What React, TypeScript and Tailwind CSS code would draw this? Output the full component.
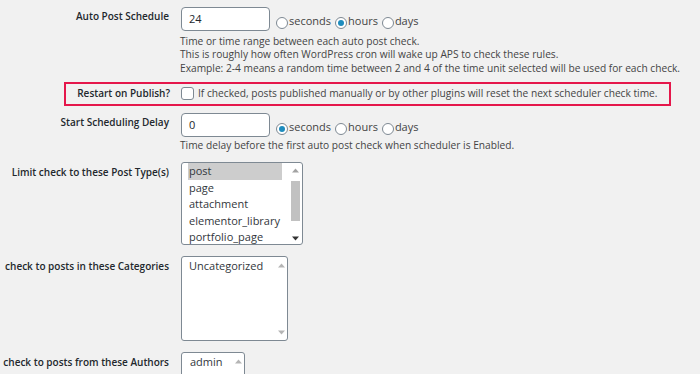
import React from "react";

const font = { fontFamily: '"Open Sans", "Noto Sans", sans-serif' };

function Radio({ checked }: { checked?: boolean }) {
  return (
    <span className="inline-flex items-center justify-center w-[12px] h-[12px] rounded-full border border-[#7e8993] bg-white shrink-0 mt-[3px]">
      {checked && <span className="w-[6px] h-[6px] rounded-full bg-[#1e8cbe]" />}
    </span>
  );
}

function Radios({ sel }: { sel: number }) {
  const items = ["seconds", "hours", "days"];
  return (
    <div className="flex items-center ml-[6px]">
      {items.map((t, i) => (
        <span key={t} className="flex items-center mr-[4px]">
          <Radio checked={sel === i} />
          <span className="ml-[1px] text-[11px] text-[#444]">{t}</span>
        </span>
      ))}
    </div>
  );
}

function UpArrow({ color }: { color: string }) {
  return (
    <svg width="7" height="5" viewBox="0 0 7 5">
      <path d="M0 4.5 L3.5 0.5 L7 4.5 Z" fill={color} />
    </svg>
  );
}
function DownArrow({ color }: { color: string }) {
  return (
    <svg width="7" height="5" viewBox="0 0 7 5">
      <path d="M0 0.5 L3.5 4.5 L7 0.5 Z" fill={color} />
    </svg>
  );
}

export default function App() {
  return (
    <div className="w-[700px] h-[374px] bg-[#f1f1f1] overflow-hidden relative text-[#23282d]" style={font}>
      {/* Row 1 */}
      <div className="flex pt-[7px]">
        <div className="w-[169px] shrink-0 text-right text-[10px] font-semibold pt-[2px] whitespace-nowrap">Auto Post Schedule</div>
        <div className="ml-[11px]">
          <div className="flex items-start">
            <div className="ml-[1px] w-[89px] h-[24px] border border-[#7e8993] rounded-[4px] bg-white text-[11px] pl-[7px] flex items-center">24</div>
            <div className="pt-[6px]">
              <Radios sel={1} />
            </div>
          </div>
          <div className="mt-[4px] text-[10.2px] leading-[13.3px] text-[#444] whitespace-nowrap">
            <div>Time or time range between each auto post check.</div>
            <div>This is roughly how often WordPress cron will wake up APS to check these rules.</div>
            <div>Example: 2-4 means a random time between 2 and 4 of the time unit selected will be used for each check.</div>
          </div>
        </div>
      </div>

      {/* Row 2 - highlighted */}
      <div className="mt-[7px] ml-[64px] w-[607px] h-[24px] border-2 border-[#e5174b] flex items-center">
        <div className="w-[104px] shrink-0 text-right text-[10px] font-semibold whitespace-nowrap">Restart on Publish?</div>
        <span className="ml-[11px] w-[13px] h-[13px] border border-[#7e8993] rounded-[3px] bg-white shrink-0" />
        <span className="ml-[4px] text-[10.2px] text-[#444] whitespace-nowrap">If checked, posts published manually or by other plugins will reset the next scheduler check time.</span>
      </div>

      {/* Row 3 */}
      <div className="flex mt-[7px]">
        <div className="w-[169px] shrink-0 text-right text-[10px] font-semibold pt-[2px] whitespace-nowrap">Start Scheduling Delay</div>
        <div className="ml-[11px]">
          <div className="flex items-start">
            <div className="ml-[1px] w-[89px] h-[24px] border border-[#7e8993] rounded-[4px] bg-white text-[11px] pl-[7px] flex items-center">0</div>
            <div className="pt-[6px]">
              <Radios sel={0} />
            </div>
          </div>
          <div className="mt-[2px] text-[10.2px] leading-[13.3px] text-[#444] whitespace-nowrap">
            Time delay before the first auto post check when scheduler is Enabled.
          </div>
        </div>
      </div>

      {/* Row 4 - post types */}
      <div className="flex mt-[10px]">
        <div className="w-[169px] shrink-0 text-right text-[10px] font-semibold pt-[3px] whitespace-nowrap">Limit check to these Post Type(s)</div>
        <div className="ml-[12px] w-[122px] h-[83px] border border-[#7e8993] rounded-[3px] bg-white flex overflow-hidden">
          <div className="flex-1 pl-[6px] pt-0 text-[11px] text-[#32373c]">
            <div className="h-[16.5px] leading-[16.5px] bg-[#cdcdcd] pl-[1px] w-[94px]">post</div>
            <div className="h-[16.5px] leading-[16.5px] pl-[1px]">page</div>
            <div className="h-[16.5px] leading-[16.5px] pl-[1px]">attachment</div>
            <div className="h-[16.5px] leading-[16.5px] pl-[1px]">elementor_library</div>
            <div className="h-[16.5px] leading-[16.5px] pl-[1px]">portfolio_page</div>
          </div>
          <div className="w-[13px] flex flex-col items-center pt-[5px] pb-[3px]">
            <UpArrow color="#a3a3a3" />
            <div className="mt-[8px] w-[9px] h-[40px] bg-[#c1c1c1]" />
            <div className="flex-1" />
            <DownArrow color="#333" />
          </div>
        </div>
      </div>

      {/* Row 5 - categories */}
      <div className="flex mt-[11px]">
        <div className="w-[169px] shrink-0 text-right text-[10px] font-semibold pt-[3px] whitespace-nowrap">check to posts in these Categories</div>
        <div className="ml-[12px] w-[107px] h-[85px] border border-[#7e8993] rounded-[3px] bg-white flex overflow-hidden">
          <div className="flex-1 pl-[7px] pt-[1px] text-[11px] text-[#32373c] leading-[16.5px]">Uncategorized</div>
          <div className="w-[12px] flex flex-col items-center pt-[6px] pb-[5px]">
            <UpArrow color="#b5b5b5" />
            <div className="flex-1" />
            <DownArrow color="#b5b5b5" />
          </div>
        </div>
      </div>

      {/* Row 6 - authors */}
      <div className="flex mt-[11px]">
        <div className="w-[169px] shrink-0 text-right text-[10px] font-semibold pt-[3px] whitespace-nowrap">check to posts from these Authors</div>
        <div className="ml-[12px] w-[64px] h-[40px] border border-[#7e8993] rounded-[3px] bg-white flex overflow-hidden">
          <div className="flex-1 pl-[8px] pt-[1px] text-[11px] text-[#32373c] leading-[16.5px]">admin</div>
          <div className="w-[12px] flex flex-col items-center pt-[6px]">
            <UpArrow color="#b5b5b5" />
          </div>
        </div>
      </div>
    </div>
  );
}
